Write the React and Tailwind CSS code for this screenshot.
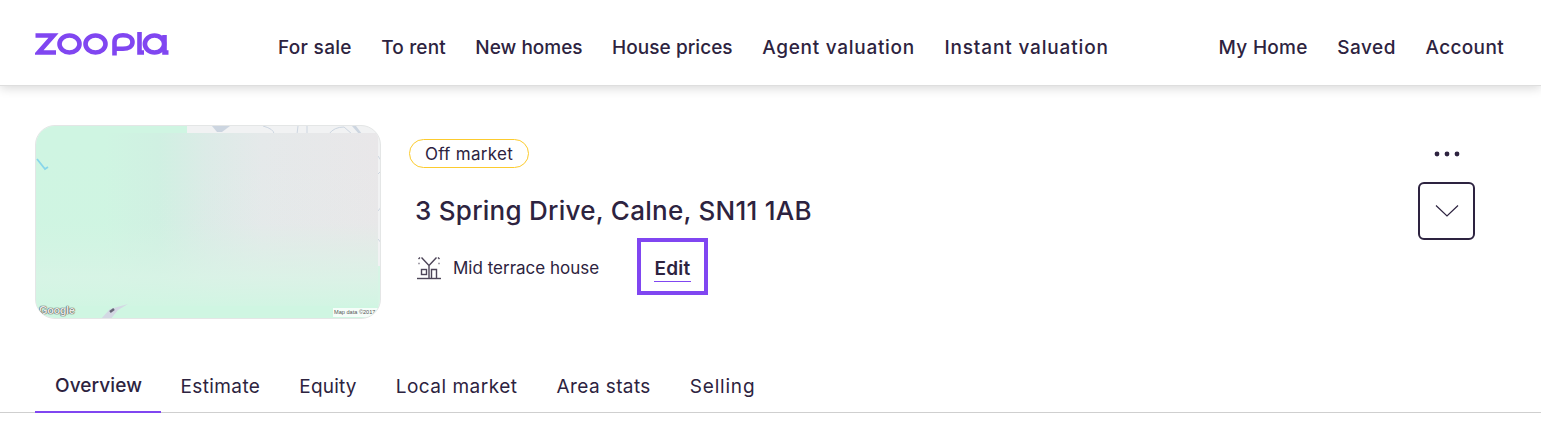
const F = { fontFamily: 'Inter, "Noto Sans", sans-serif' };

function Logo() {
  return (
    <svg width="134" height="30" viewBox="0 0 134 30" fill="none" stroke="#8046F1" strokeWidth="4.6">
      <path d="M0.5 5.5H18.5L3.5 22.5H21" />
      <ellipse cx="34.5" cy="14" rx="10" ry="8.5" />
      <ellipse cx="60.5" cy="14" rx="10" ry="8.5" />
      <path d="M79.5 25.5V12C79.5 7.5 83 5.3 88 5.3C93.5 5.3 97.5 8 97.5 12C97.5 16.5 93.5 18.8 88 18.8H81" />
      <path d="M104.5 2V22.5H109" />
      <ellipse cx="119.5" cy="14" rx="9.6" ry="8.5" />
      <path d="M129.5 5V22.5H133.5" />
    </svg>
  );
}

function HouseIcon() {
  return (
    <svg width="26" height="26" viewBox="0 0 26 26" fill="none" stroke="#4d4558" strokeWidth="1.4">
      <path d="M1 24.5H25" />
      <path d="M13 24V11.5L5.5 3.5M13 11.5L20.5 3.5" />
      <path d="M2.5 5L4 3.5M22 3.5L23.5 5" />
      <path d="M2.5 9.5H3.5M22.5 9.5H23.5" />
      <rect x="5.5" y="15.5" width="5" height="5" />
      <path d="M15.5 24V15.5H20.5V24" />
    </svg>
  );
}

function MapThumb() {
  return (
    <div className="w-[346px] h-[194px] rounded-[20px] border border-[#e4e6e6] overflow-hidden shrink-0 relative bg-[#f1f2f3]">
      <svg className="absolute inset-0" width="346" height="194" viewBox="0 0 346 194">
        <defs>
          <linearGradient id="h" x1="0" x2="1" y1="0" y2="0">
            <stop offset="0" stopColor="#cff5e2" />
            <stop offset="0.2" stopColor="#cff5e2" />
            <stop offset="0.36" stopColor="#d0f0e2" />
            <stop offset="0.5" stopColor="#dcebe7" />
            <stop offset="0.66" stopColor="#e5e9ea" />
            <stop offset="1" stopColor="#e9e7e9" />
          </linearGradient>
          <linearGradient id="v" x1="0" x2="0" y1="0" y2="1">
            <stop offset="0" stopColor="#d6f3e4" stopOpacity="0" />
            <stop offset="0.5" stopColor="#d6f3e4" stopOpacity="0.05" />
            <stop offset="0.8" stopColor="#d9f4e6" stopOpacity="0.8" />
            <stop offset="1" stopColor="#cff6e2" stopOpacity="1" />
          </linearGradient>
        </defs>
        <rect x="0" y="0" width="151" height="8" fill="#cff5e2" />
        <path d="M176 0L181 6H186L194 0Z" fill="#ccd5e0" />
        <path d="M227 0Q238 3 238 8M262 0L261 8M271 0V8M293 8Q298 1 308 1L316 8" stroke="#ccd5e0" fill="none" />
        <path d="M316 0L323 8H326L320 0Z" fill="#ccd5e0" />
        <path d="M342 30L346 36M342 48L346 44M342 85L346 80M342 113L346 118" stroke="#ccd5e0" fill="none" />
        <rect x="0" y="7" width="342" height="180" fill="url(#h)" />
        <rect x="0" y="7" width="342" height="180" fill="url(#v)" />
        <rect x="342" y="140" width="4" height="54" fill="#d6f5e5" />
        <rect x="0" y="180" width="346" height="14" fill="#cff6e2" />
        <path d="M1 33L9 43L12 41" stroke="#88d6ea" strokeWidth="1.8" fill="none" />
        <path d="M64 194L74 183L92 178L82 184L74 194Z" fill="#d3d8e3" />
        <path d="M74 186L78 183" stroke="#667" strokeWidth="2.5" />
      </svg>
      <span className="absolute left-[3px] bottom-[1px] text-[11px] leading-[14px] text-[#e8e8e8] font-bold tracking-[-0.4px]" style={{ fontFamily: '"Liberation Sans", sans-serif', textShadow: '0 0 1px #333, 0 0 1px #333' }}>Google</span>
      <span className="absolute left-[297px] bottom-[1px] w-[49px] whitespace-nowrap overflow-hidden bg-white/80 text-[5.6px] leading-[9px] px-[1px] text-[#555]" style={{ fontFamily: '"Liberation Sans", sans-serif' }}>Map data ©2017</span>
    </div>
  );
}

const NAV = [
  ['For sale', 'tracking-[0.3px]'],
  ['To rent', 'tracking-[0.15px]'],
  ['New homes', 'tracking-[0px]'],
  ['House prices', 'tracking-[0.05px]'],
  ['Agent valuation', 'tracking-[0.72px]'],
  ['Instant valuation', 'tracking-[0.85px]'],
];
const NAV2 = [
  ['My Home', 'tracking-[0.3px]'],
  ['Saved', 'tracking-[0.5px]'],
  ['Account', 'tracking-[0.35px]'],
];
const TABS = [
  ['Overview', 'tracking-[0.1px]'],
  ['Estimate', 'tracking-[0.38px]'],
  ['Equity', 'tracking-[0.2px]'],
  ['Local market', 'tracking-[0.5px]'],
  ['Area stats', 'tracking-[0.4px]'],
  ['Selling', 'tracking-[0.8px]'],
];

export default function App() {
  return (
    <div className="w-[1541px] h-[437px] bg-white overflow-hidden text-[#2d2340]" style={F}>
      <header className="h-[86px] flex items-center pl-[35px] pr-[37px] pt-[11px] shadow-[0_2px_10px_rgba(0,0,0,0.16)] border-b border-[#dedede] relative">
        <div className="w-[243px] -mt-[6px]"><Logo /></div>
        <nav className="flex gap-[29.5px] text-[19px] font-medium">
          {NAV.map(([n, c]) => <span key={n} className={c}>{n}</span>)}
        </nav>
        <nav className="flex gap-[29.5px] text-[19px] font-medium ml-auto">
          {NAV2.map(([n, c]) => <span key={n} className={c}>{n}</span>)}
        </nav>
      </header>

      <main className="flex pl-[35px] pt-[39px] h-[272px]">
        <MapThumb />
        <div className="ml-[28px] flex-1">
          <span className="inline-block h-[29px] w-[120px] mt-[14px] rounded-full border border-[#fccb2e] text-[17px] leading-[29px] text-center tracking-[0.3px]">Off market</span>
          <h1 className="ml-[6px] mt-[25px] text-[26px] leading-[36px] font-medium tracking-[0.26px]">3 Spring Drive, Calne, SN11 1AB</h1>
          <div className="flex items-center ml-[7px] mt-[9px]">
            <HouseIcon />
            <span className="ml-[11px] w-[184px] text-[17px] mt-[5px]">Mid terrace house</span>
            <span className="w-[71px] h-[57px] border-[4px] border-[#8046F1] flex items-center justify-center">
              <span className="text-[19px] leading-[23px] font-semibold border-b border-[#8046F1] pb-[1px] mt-[5px] tracking-[0.3px]">Edit</span>
            </span>
          </div>
        </div>
        <div className="w-[57px] mr-[66px] flex flex-col items-center pt-[26px]">
          <svg width="26" height="6" viewBox="0 0 26 6" fill="#2d2340">
            <circle cx="3" cy="3" r="2.4" /><circle cx="13" cy="3" r="2.4" /><circle cx="23" cy="3" r="2.4" />
          </svg>
          <div className="w-[57px] h-[58px] mt-[25px] rounded-[6px] border-2 border-[#2d2340] flex items-center justify-center">
            <svg width="24" height="14" viewBox="0 0 24 14" fill="none" stroke="#2d2340" strokeWidth="1.2"><path d="M1 1.5L12 12L23 1.5" /></svg>
          </div>
        </div>
      </main>

      <nav className="flex pl-[35px] h-[55px] border-b border-[#cfcfcf] text-[19px]">
        {TABS.map(([t, c], i) => (
          <span key={t} className={c + (i === 0
            ? " pl-[20px] pr-[19px] pt-[14px] h-[55px] border-b-2 border-[#8046F1] font-medium"
            : " px-[19.5px] pt-[15px] h-[55px]")}>{t}</span>
        ))}
      </nav>
    </div>
  );
}
